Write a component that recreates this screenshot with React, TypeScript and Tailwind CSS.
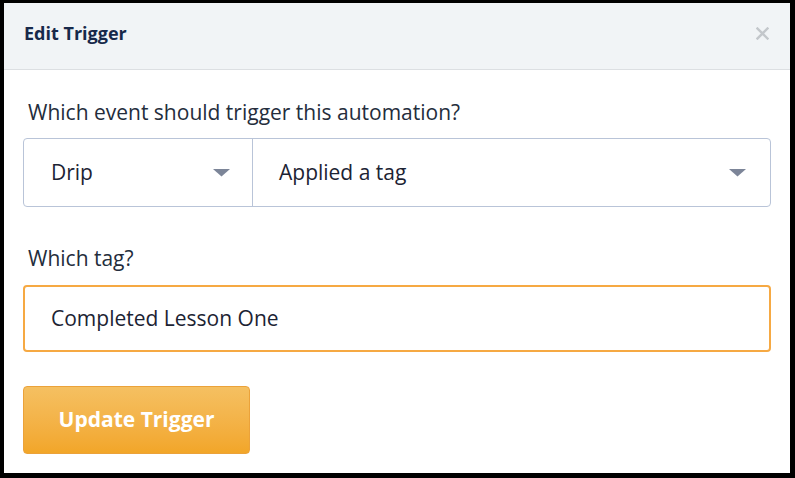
const FONT = "font-['Open_Sans','Lato',sans-serif]";

function Caret() {
  return (
    <svg width="17" height="8" viewBox="0 0 17 8" className="shrink-0">
      <path d="M0 0 H17 L8.5 7.5 Z" fill="#7c8598" />
    </svg>
  );
}

function CloseIcon() {
  return (
    <svg width="13" height="13" viewBox="0 0 13 13">
      <path d="M1.5 1.5 L11.5 11.5 M11.5 1.5 L1.5 11.5" stroke="#c3c7cb" strokeWidth="2.4" strokeLinecap="square" />
    </svg>
  );
}

export default function App() {
  return (
    <div className={`h-[478px] w-[795px] bg-black pl-[4px] pt-[3px] pr-[5px] pb-[5px] ${FONT}`}>
      <div className="flex h-full w-full flex-col bg-white">
        <div className="flex h-[67px] items-start justify-between border-b border-[#dcdfe2] bg-[#f1f4f6] pl-[20px] pr-[21px]">
          <span className="mt-[18px] text-[18px] leading-[24px] font-bold text-[#17294a]">Edit Trigger</span>
          <div className="mt-[24px]">
            <CloseIcon />
          </div>
        </div>
        <div className="flex flex-col px-[19px] pt-[28px]">
          <p className="pl-[5px] text-[21px] leading-[28px] text-[#242d3c]">
            Which event should trigger this automation?
          </p>
          <div className="mt-[12px] flex h-[69px] rounded-[4px] border border-[#b9c4d8]">
            <div className="flex w-[229px] items-center justify-between border-r border-[#b9c4d8] pl-[27px] pr-[22px]">
              <span className="text-[21px] text-[#1c2333]">Drip</span>
              <Caret />
            </div>
            <div className="flex flex-1 items-center justify-between pl-[26px] pr-[24px]">
              <span className="text-[21px] text-[#1c2333]">Applied a tag</span>
              <Caret />
            </div>
          </div>
          <p className="mt-[37px] pl-[5px] text-[21px] leading-[28px] text-[#242d3c]">Which tag?</p>
          <div className="mt-[13px] flex h-[67px] items-center rounded-[4px] border-2 border-[#f6a943] pl-[26px]">
            <span className="text-[21px] text-[#1c2333]">Completed Lesson One</span>
          </div>
          <button
            type="button"
            className="mt-[34px] flex h-[68px] w-[227px] items-center justify-center rounded-[4px] border border-[#eba23a] bg-gradient-to-b from-[#f5c061] to-[#f2a628] text-[21px] font-bold text-white"
          >
            Update Trigger
          </button>
        </div>
      </div>
    </div>
  );
}
